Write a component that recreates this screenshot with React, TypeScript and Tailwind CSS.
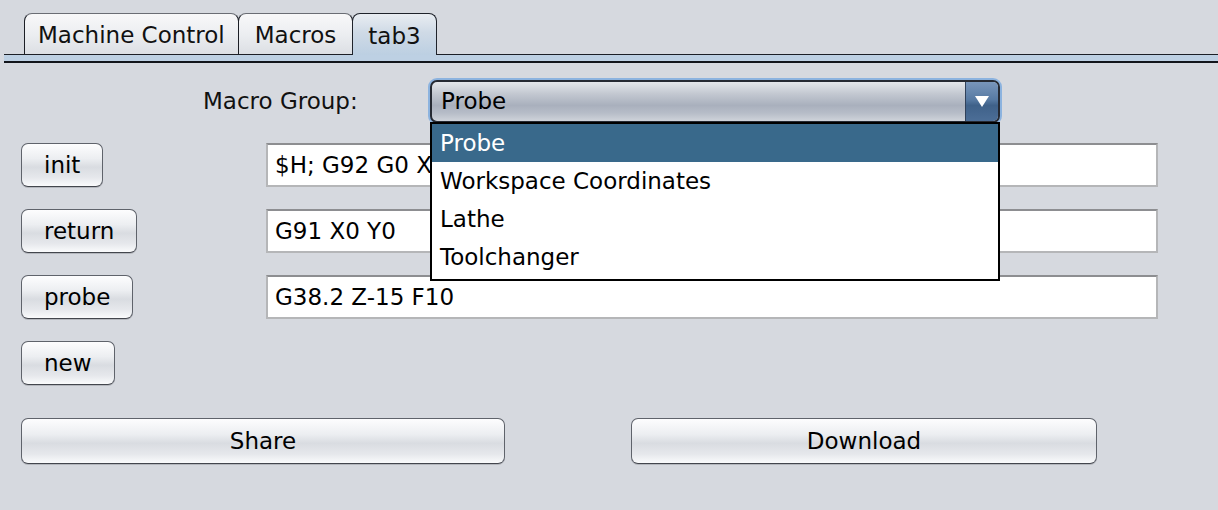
import React from 'react';

const TABS = [
  { label: 'Machine Control', selected: false, pad: 'px-[13px]' },
  { label: 'Macros', selected: false, pad: 'px-[16px]' },
  { label: 'tab3', selected: true, pad: 'px-[15px]' },
];

const MACROS = [
  { name: 'init', code: '$H; G92 G0 X0 Y0' },
  { name: 'return', code: 'G91 X0 Y0' },
  { name: 'probe', code: 'G38.2 Z-15 F10' },
];

const GROUPS = ['Probe', 'Workspace Coordinates', 'Lathe', 'Toolchanger'];

function Button({ label, className = '' }: { label: string; className?: string }) {
  return (
    <button
      className={`h-[44px] rounded-[7px] border border-[#5f636b] border-b-[#43464d] bg-[linear-gradient(to_bottom,#fdfdfe_0%,#eceef1_35%,#d9dce1_55%,#e6e8ec_80%,#fafbfc_100%)] text-black shadow-[0_1px_0_#b4b7bd] flex items-center justify-center ${className}`}
    >
      {label}
    </button>
  );
}

function Tab({ label, selected, pad }: { label: string; selected: boolean; pad: string }) {
  if (selected) {
    return (
      <div className={`-ml-px h-[42px] pt-[3px] ${pad} flex items-center rounded-t-[8px] border border-b-0 border-[#1f232b] bg-[linear-gradient(to_bottom,#e9edf2_0%,#cfdae6_45%,#bccfe2_100%)] text-[#111]`}>
        {label}
      </div>
    );
  }
  return (
    <div className={`-ml-px first:ml-0 h-[42px] pt-[3px] ${pad} flex items-center rounded-t-[8px] border border-[#1c1f26] border-t-[#6a6d74] bg-[linear-gradient(to_bottom,#f8f8f9_0%,#eceef1_50%,#dcdfe4_100%)] text-[#111]`}>
      {label}
    </div>
  );
}

export default function App() {
  return (
    <div className="w-[1218px] h-[510px] bg-[#d6d9df] font-['DejaVu_Sans',sans-serif] text-[23px] text-black overflow-hidden">
      {/* tab strip */}
      <div className="pt-[13px] pl-[4px]">
        <div className="flex items-end">
          <div className="w-[21px] self-stretch border-b border-[#1c1f26]" />
          {TABS.map((t) => (
            <Tab key={t.label} label={t.label} selected={t.selected} pad={t.pad} />
          ))}
          <div className="flex-1 self-stretch border-b border-[#1c1f26]" />
        </div>
        <div className="h-[8px] bg-[#bdd0e3] border-b-2 border-[#12151b]" />
      </div>

      {/* macro group selector */}
      <div className="relative">
        <div className="flex items-center mt-[15px] pl-[203px]">
          <span className="w-[225px] text-[#111]">Macro Group:</span>
          <div className="p-[2px] rounded-[9px] bg-[#8cb3df]">
            <div className="w-[570px] h-[43px] flex items-stretch rounded-[7px] border-2 border-[#262a33] overflow-hidden bg-[linear-gradient(to_bottom,#e4e7eb_0%,#c3c8d1_30%,#a9b0bd_60%,#b7bdc8_80%,#cfd3da_100%)]">
              <span className="flex-1 flex items-center pl-[9px]">Probe</span>
              <span className="w-[33px] flex items-center justify-center border-l border-[#30415a] bg-[linear-gradient(to_bottom,#7996bb_0%,#577aa3_45%,#3f6189_60%,#4c6e97_100%)]">
                <svg width="14" height="11" viewBox="0 0 14 11">
                  <path d="M0 0 L14 0 L7 11 Z" fill="#fff" />
                </svg>
              </span>
            </div>
          </div>
        </div>

        {/* open popup list */}
        <div className="absolute left-[430px] top-[44px] w-[570px] border-2 border-black bg-white pb-[3px] z-10">
          {GROUPS.map((g, i) => (
            <div
              key={g}
              className={`h-[38px] flex items-center pl-[8px] ${i === 0 ? 'bg-[#39698b] text-white' : 'text-black'}`}
            >
              {g}
            </div>
          ))}
        </div>

        {/* macro rows */}
        <div className="mt-[18px] flex flex-col gap-[22px] pl-[21px]">
          {MACROS.map((m) => (
            <div key={m.name} className="flex items-center">
              <div className="w-[245px]">
                <Button label={m.name} className="px-[22px]" />
              </div>
              <div className="w-[892px] h-[44px] flex items-center pl-[7px] bg-white border-2 border-[#b5b6b8] border-t-[#8d8e91]">
                {m.code}
              </div>
            </div>
          ))}
          <div className="flex">
            <Button label="new" className="px-[22px]" />
          </div>
        </div>

        {/* actions */}
        <div className="mt-[33px] flex pl-[21px] gap-[126px]">
          <Button label="Share" className="w-[484px] h-[46px]" />
          <Button label="Download" className="w-[466px] h-[46px]" />
        </div>
      </div>
    </div>
  );
}
